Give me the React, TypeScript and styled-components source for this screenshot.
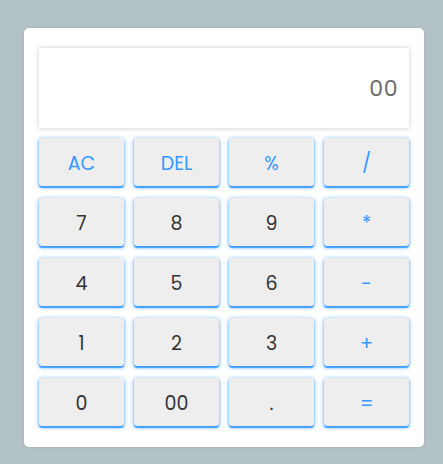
import React from "react";
import styled, { createGlobalStyle } from "styled-components";

const Global = createGlobalStyle`
  html, body { margin: 0; padding: 0; }
  body {
    background: #b3c2c6;
    font-family: "Poppins", "Inter", "Noto Sans", sans-serif;
    width: 443px;
    height: 464px;
  }
`;

const Page = styled.div`
  padding: 28px 19px 17px 24px;
  display: flex;
`;

const Card = styled.div`
  width: 370px;
  background: #ffffff;
  border-radius: 5px;
  padding: 20px 15px 21px 15px;
  display: flex;
  flex-direction: column;
  gap: 10px;
  box-shadow: 0 0 4px rgba(0, 0, 0, 0.08);
`;

const Display = styled.div`
  height: 80px;
  background: #fff;
  border-radius: 2px;
  box-shadow: 0 0 5px rgba(0, 0, 0, 0.22);
  display: flex;
  align-items: center;
  justify-content: flex-end;
  padding: 0 11px;
  font-size: 22px;
  color: #6b6b6b;
  letter-spacing: 0.5px;
`;

const Keys = styled.div`
  display: grid;
  grid-template-columns: repeat(4, 1fr);
  gap: 12px 10px;
`;

const Key = styled.button<{ $op?: boolean }>`
  height: 48px;
  box-sizing: border-box;
  border: none;
  border-radius: 3px;
  background: #eeeeee;
  box-shadow: 0 1px 4px rgba(30, 144, 255, 0.8),
    0 1.5px 1px rgba(30, 144, 255, 0.75);
  font-family: inherit;
  font-size: 19px;
  padding: 2px 0 0 0;
  color: ${(p) => (p.$op ? "#3399ff" : "#333333")};
  cursor: pointer;
  display: flex;
  align-items: center;
  justify-content: center;
`;

const keys: { label: string; op?: boolean }[] = [
  { label: "AC", op: true },
  { label: "DEL", op: true },
  { label: "%", op: true },
  { label: "/", op: true },
  { label: "7" },
  { label: "8" },
  { label: "9" },
  { label: "*", op: true },
  { label: "4" },
  { label: "5" },
  { label: "6" },
  { label: "-", op: true },
  { label: "1" },
  { label: "2" },
  { label: "3" },
  { label: "+", op: true },
  { label: "0" },
  { label: "00" },
  { label: "." },
  { label: "=", op: true },
];

export default function App() {
  return (
    <>
      <Global />
      <Page>
        <Card>
          <Display>00</Display>
          <Keys>
            {keys.map((k) => (
              <Key key={k.label} $op={k.op}>
                {k.label}
              </Key>
            ))}
          </Keys>
        </Card>
      </Page>
    </>
  );
}
